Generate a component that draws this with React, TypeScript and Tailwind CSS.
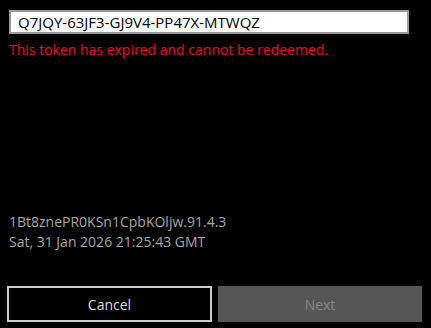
export default function App() {
  return (
    <div
      className="flex h-[328px] w-[431px] flex-col bg-black"
      style={{ fontFamily: '"Segoe UI", "Open Sans", "Noto Sans", sans-serif' }}
    >
      <div className="px-[9px] pt-[10px]">
        <div className="flex h-[24px] w-[400px] items-center border-2 border-[#999999] bg-white pl-[7px] text-[15px] text-black">
          Q7JQY-63JF3-GJ9V4-PP47X-MTWQZ
        </div>
        <p className="mt-[6px] text-[14px] leading-[20px] text-[#e81123]">
          This token has expired and cannot be redeemed.
        </p>
      </div>

      <div className="mt-auto px-[9px] text-[14px] leading-[20px] text-[#a6a6a6]">
        <p>1Bt8znePR0KSn1CpbKOljw.91.4.3</p>
        <p>Sat, 31 Jan 2026 21:25:43 GMT</p>
      </div>

      <div className="mt-[34px] mb-[6px] flex gap-[6px] pl-[7px] pr-[9px]">
        <button className="h-[36px] w-[205px] border-2 border-[#cccccc] bg-black text-[14px] text-[#dddddd]">
          Cancel
        </button>
        <button className="h-[36px] w-[204px] bg-[#555555] text-[14px] text-[#888888]">
          Next
        </button>
      </div>
    </div>
  );
}
